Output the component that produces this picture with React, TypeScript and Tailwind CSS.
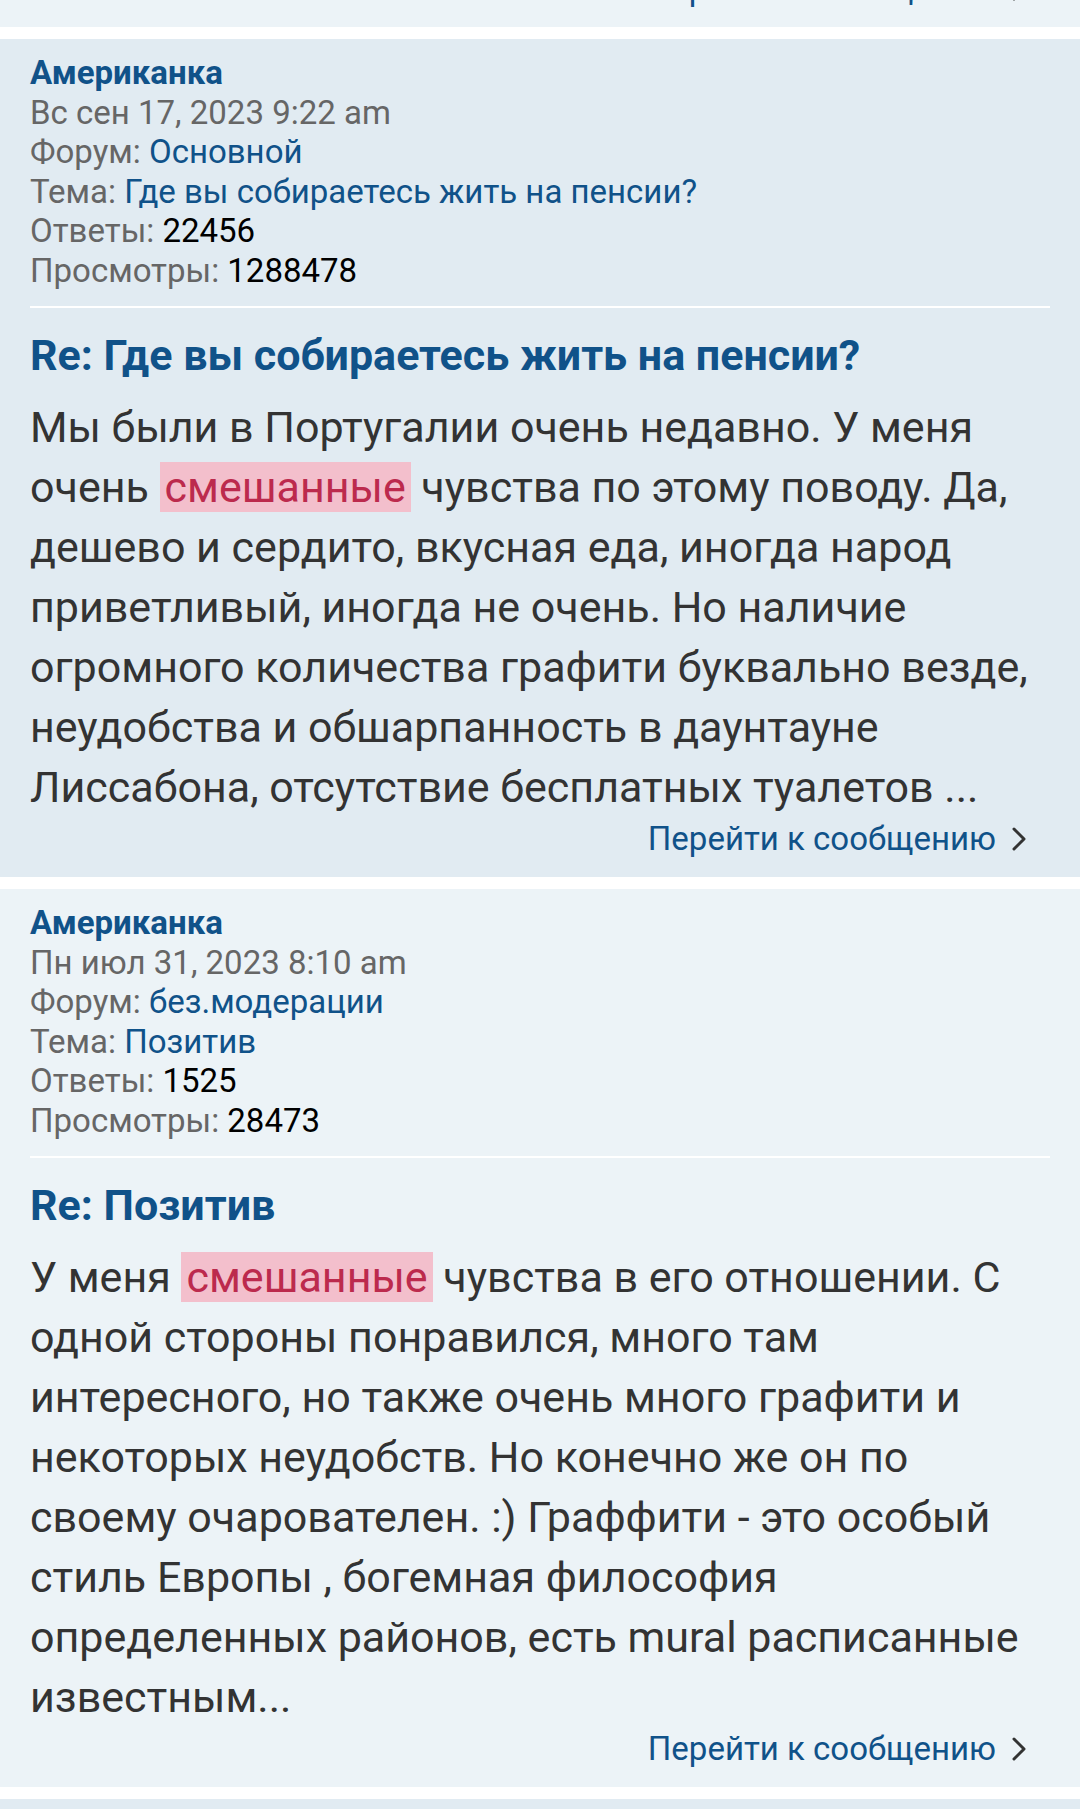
import React from 'react'

type Post = {
    author: string
    date: string
    forum: string
    topic: string
    replies: string
    views: string
    title: string
    lines: React.ReactNode[]
    bg: string
}

const Hl = ({ children }: { children: React.ReactNode }) => (
    <span className="bg-[#f3bfcc] text-[#bc2a4d] px-[5px]">{children}</span>
)

const posts: Post[] = [
    {
        author: 'Американка',
        date: 'Вс сен 17, 2023 9:22 am',
        forum: 'Основной',
        topic: 'Где вы собираетесь жить на пенсии?',
        replies: '22456',
        views: '1288478',
        title: 'Re: Где вы собираетесь жить на пенсии?',
        bg: 'bg-[#e1ebf2]',
        lines: [
            'Мы были в Португалии очень недавно. У меня',
            <>очень <Hl>смешанные</Hl> чувства по этому поводу. Да,</>,
            'дешево и сердито, вкусная еда, иногда народ',
            'приветливый, иногда не очень. Но наличие',
            'огромного количества графити буквально везде,',
            'неудобства и обшарпанность в даунтауне',
            'Лиссабона, отсутствие бесплатных туалетов ...',
        ],
    },
    {
        author: 'Американка',
        date: 'Пн июл 31, 2023 8:10 am',
        forum: 'без.модерации',
        topic: 'Позитив',
        replies: '1525',
        views: '28473',
        title: 'Re: Позитив',
        bg: 'bg-[#ecf3f7]',
        lines: [
            <>У меня <Hl>смешанные</Hl> чувства в его отношении. С</>,
            'одной стороны понравился, много там',
            'интересного, но также очень много графити и',
            'некоторых неудобств. Но конечно же он по',
            'своему очарователен. :) Граффити - это особый',
            'стиль Европы , богемная философия',
            'определенных районов, есть mural расписанные',
            'известным...',
        ],
    },
]

function Chevron() {
    return (
        <svg width="16" height="24" viewBox="0 0 16 24" className="ml-[15px] mr-[23px]">
            <path d="M3 2 L13 12 L3 22" fill="none" stroke="#333333" strokeWidth="3" strokeLinecap="round" strokeLinejoin="round" />
        </svg>
    )
}

function JumpLink() {
    return (
        <div className="flex items-center justify-end text-[33px] leading-[40px] text-[#105289]">
            <span>Перейти к сообщению</span>
            <Chevron />
        </div>
    )
}

function PostCard({ post }: { post: Post }) {
    return (
        <div className={`${post.bg} px-[30px] pt-[14px] pb-[18px]`}>
            <div className="text-[33px] leading-[39.5px] text-[#666666]">
                <div className="font-bold text-[#105289]">{post.author}</div>
                <div>{post.date}</div>
                <div>
                    Форум: <span className="text-[#105289]">{post.forum}</span>
                </div>
                <div>
                    Тема: <span className="text-[#105289]">{post.topic}</span>
                </div>
                <div>
                    Ответы: <span className="text-black">{post.replies}</span>
                </div>
                <div>
                    Просмотры: <span className="text-black">{post.views}</span>
                </div>
            </div>

            <div className="mt-[16px] h-[2px] bg-white" />

            <h3 className="mt-[22px] text-[43px] leading-[50px] font-bold text-[#105289]">{post.title}</h3>

            <div className="mt-[17px] text-[43px] leading-[60px] text-[#333333] whitespace-nowrap">
                {post.lines.map((line, i) => (
                    <div key={i}>{line}</div>
                ))}
            </div>

            <div className="mt-[2px]">
                <JumpLink />
            </div>
        </div>
    )
}

export default function App() {
    return (
        <div className="w-[1080px] h-[1809px] overflow-hidden bg-white font-['Roboto','Noto_Sans',sans-serif]">
            {/* tail of the previous result */}
            <div className="h-[27px] overflow-hidden bg-[#ecf3f7] px-[30px] pb-[18px] flex flex-col justify-end">
                <div className="shrink-0">
                    <JumpLink />
                </div>
            </div>

            <div className="flex flex-col gap-[12px] pt-[12px]">
                {posts.map((p, i) => (
                    <PostCard key={i} post={p} />
                ))}
                <div className="h-[40px] bg-[#e1ebf2]" />
            </div>
        </div>
    )
}
